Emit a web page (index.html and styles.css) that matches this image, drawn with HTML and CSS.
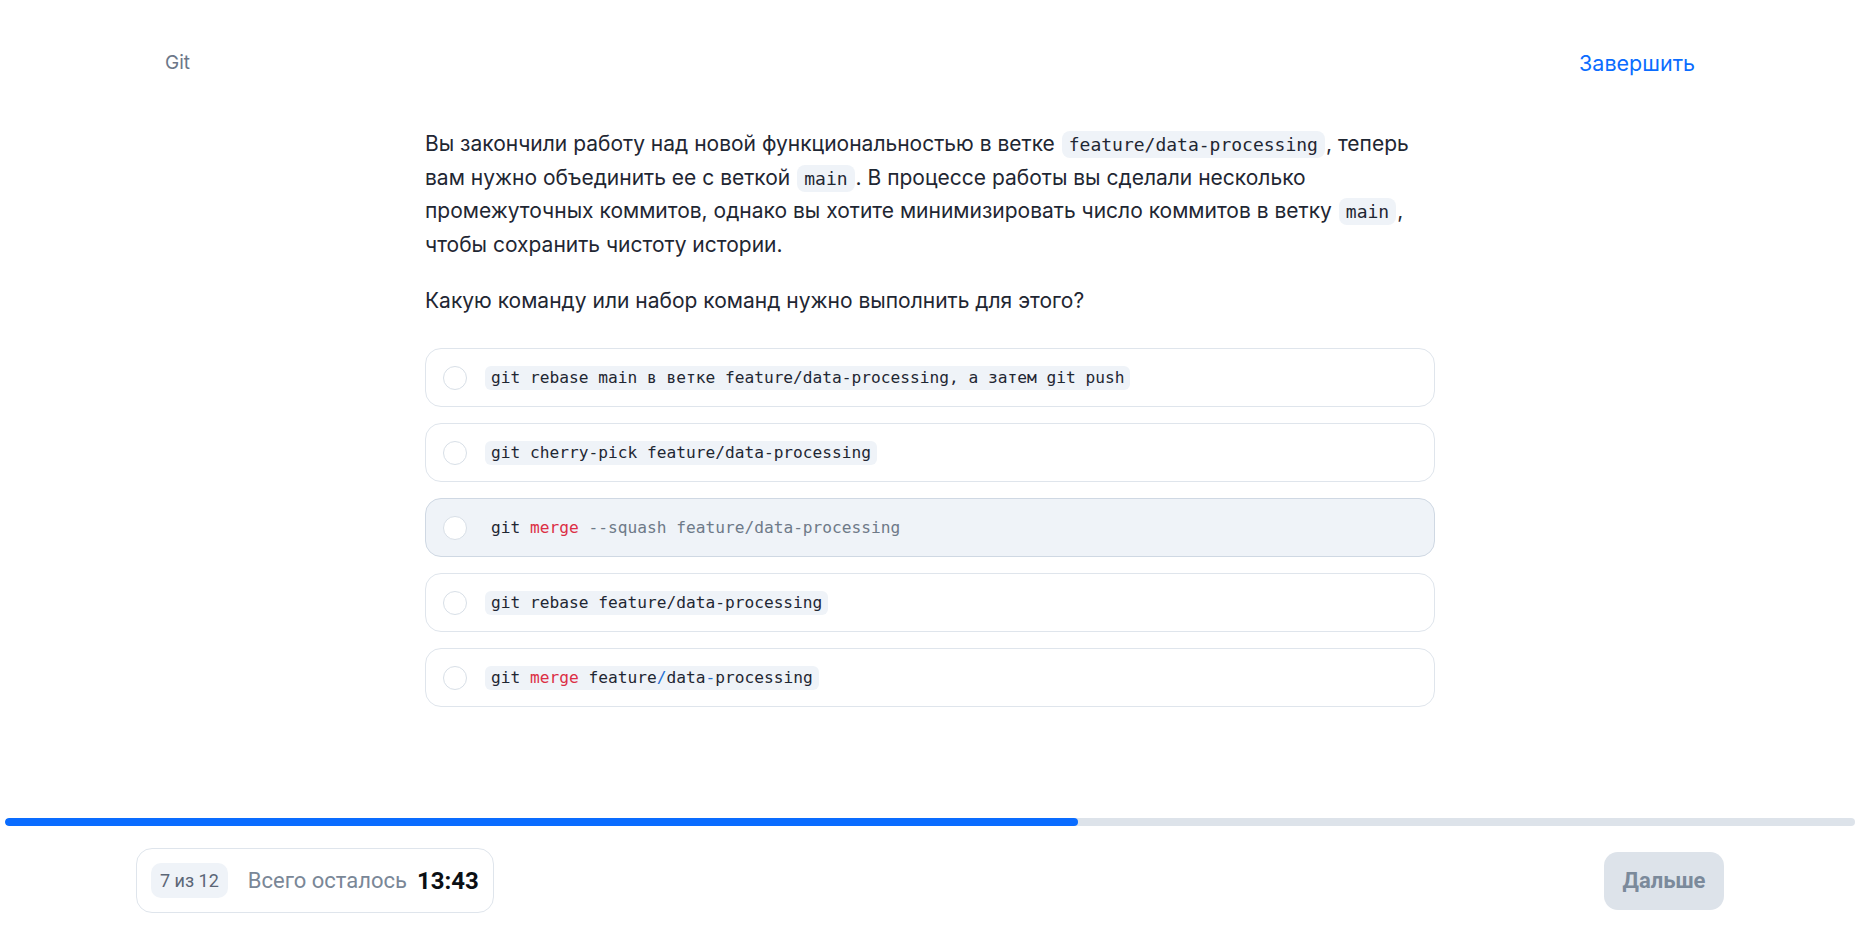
FILE: index.html
```html
<!DOCTYPE html>
<html lang="ru">
<head>
<meta charset="utf-8">
<title>Git — тест</title>
<link rel="stylesheet" href="styles.css">
</head>
<body>
<div class="page">
  <header class="header">
    <span class="topic">Git</span>
    <a class="finish" href="#">Завершить</a>
  </header>

  <main class="main">
    <p class="question-text">Вы закончили работу над новой функциональностью в ветке <code class="inline">feature/data-processing</code>, теперь вам нужно объединить ее с веткой <code class="inline">main</code>. В процессе работы вы сделали несколько промежуточных коммитов, однако вы хотите минимизировать число коммитов в ветку <code class="inline">main</code>, чтобы сохранить чистоту истории.</p>
    <p class="question-ask">Какую команду или набор команд нужно выполнить для этого?</p>

    <ul class="options">
      <li class="option">
        <span class="radio"></span>
        <code class="opt-code">git rebase main в ветке feature/data-processing, а затем git push</code>
      </li>
      <li class="option">
        <span class="radio"></span>
        <code class="opt-code">git cherry-pick feature/data-processing</code>
      </li>
      <li class="option option-active">
        <span class="radio"></span>
        <code class="opt-code">git <span class="kw">merge</span> <span class="muted">--squash feature/data-processing</span></code>
      </li>
      <li class="option">
        <span class="radio"></span>
        <code class="opt-code">git rebase feature/data-processing</code>
      </li>
      <li class="option">
        <span class="radio"></span>
        <code class="opt-code">git <span class="kw">merge</span> feature<span class="op">/</span>data<span class="op">-</span>processing</code>
      </li>
    </ul>
  </main>

  <footer class="footer">
    <div class="progress"><div class="progress-fill" style="width: 58%"></div></div>
    <div class="footer-row">
      <div class="status">
        <span class="counter">7 из 12</span>
        <span class="remaining">Всего осталось</span>
        <span class="timer">13:43</span>
      </div>
      <button class="next" type="button">Дальше</button>
    </div>
  </footer>
</div>
</body>
</html>
```

FILE: styles.css
```css
* {
  box-sizing: border-box;
}

html, body {
  margin: 0;
  padding: 0;
  background: #ffffff;
}

body {
  font-family: Inter, "Noto Sans", Roboto, sans-serif;
  color: #1f2733;
}

.page {
  min-height: 100vh;
  display: flex;
  flex-direction: column;
}

.header {
  width: 1530px;
  margin: 0 auto;
  padding-top: 49px;
  display: flex;
  justify-content: space-between;
  align-items: center;
  height: 77px;
}

.topic {
  font-size: 19px;
  line-height: 28px;
  color: #6c7788;
}

.finish {
  font-size: 21.5px;
  line-height: 28px;
  color: #0a6cff;
  text-decoration: none;
  font-weight: 400;
}

.main {
  flex: 1;
  width: 1010px;
  margin: 0 auto;
  padding-top: 50px;
}

.question-text {
  margin: 0;
  font-size: 21px;
  line-height: 33.6px;
  color: #1f2733;
}

.inline {
  font-family: "DejaVu Sans Mono", "Liberation Mono", monospace;
  font-size: 18px;
  line-height: 24px;
  background: #eff3f8;
  border-radius: 8px;
  padding: 3px 7px;
  margin: 0 1px;
  color: #1f2733;
}

.question-ask {
  margin: 23px 0 0;
  font-size: 21px;
  line-height: 34px;
  color: #1f2733;
}

.options {
  list-style: none;
  margin: 30px 0 0;
  padding: 0;
  display: flex;
  flex-direction: column;
  gap: 16px;
}

.option {
  display: flex;
  align-items: center;
  gap: 18px;
  height: 59px;
  padding: 0 17px;
  border: 1px solid #dfe5ec;
  border-radius: 16px;
  background: #ffffff;
}

.option-active {
  background: #eff3f8;
  border-color: #cfd8e3;
}

.radio {
  width: 24px;
  height: 24px;
  border-radius: 50%;
  border: 1.5px solid #d8dfe7;
  background: #ffffff;
  flex: none;
}

.opt-code {
  font-family: "DejaVu Sans Mono", "Liberation Mono", monospace;
  font-size: 16.2px;
  line-height: 24px;
  background: #eff3f8;
  border-radius: 6px;
  padding: 0 6px;
  color: #1f2733;
  white-space: pre;
}

.kw {
  color: #dc2f45;
}

.muted {
  color: #6e7a88;
}

.op {
  color: #1f6fd1;
}

.footer {
  flex: none;
}

.progress {
  height: 8px;
  margin: 0 5px;
  background: #dde3ea;
  border-radius: 4px;
  overflow: hidden;
}

.progress-fill {
  height: 100%;
  background: #0a6cff;
  border-radius: 4px;
}

.footer-row {
  width: 1588px;
  margin: 0 auto;
  padding: 22px 0;
  display: flex;
  justify-content: space-between;
  align-items: center;
}

.status {
  display: flex;
  align-items: center;
  height: 65px;
  padding: 0 14px;
  border: 1px solid #dfe5ec;
  border-radius: 16px;
  font-family: Roboto, Inter, sans-serif;
}

.counter {
  height: 35px;
  line-height: 35px;
  padding: 0 9px;
  border-radius: 10px;
  background: #eff3f8;
  color: #5b6676;
  font-size: 18px;
}

.remaining {
  margin-left: 20px;
  font-size: 22px;
  color: #7a8797;
}

.timer {
  margin-left: 10px;
  font-size: 24px;
  font-weight: 700;
  color: #0b0f14;
}

.next {
  height: 58px;
  width: 120px;
  border: none;
  border-radius: 14px;
  background: #dde3ea;
  color: #7b8a9b;
  font-family: Roboto, Inter, sans-serif;
  font-size: 22px;
  font-weight: 700;
}
```
